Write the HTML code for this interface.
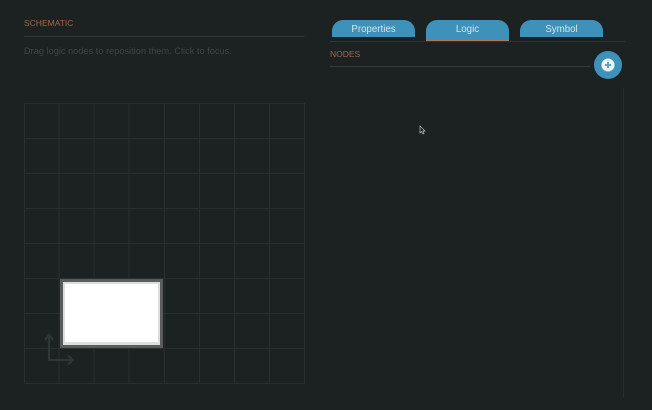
<!DOCTYPE html>
<html>
<head>
<meta charset="utf-8">
<style>
html,body{margin:0;padding:0;}
body{width:652px;height:410px;background:#1c2221;overflow:hidden;position:relative;font-family:"Liberation Sans","DejaVu Sans",sans-serif;}
.t{position:absolute;white-space:nowrap;filter:blur(.25px);}
.h{font-size:8.500px;color:#a3674a;line-height:10px;}
.tab{position:absolute;width:83px;top:20px;height:17px;background:#3e91b8;border-radius:11px 11px 0 0;color:#d3e5ec;font-size:9.700px;line-height:19px;text-align:center;}
svg{position:absolute;left:0;top:0;}
</style>
</head>
<body>
<div class="t h" style="left:24px;top:18px;">SCHEMATIC</div>
<div class="t" style="left:24px;top:45px;font-size:9.100px;letter-spacing:.06px;line-height:12px;color:#3f4645;">Drag logic nodes to reposition them. Click to focus.</div>
<div class="tab" style="left:332px;">Properties</div>
<div class="tab" style="left:426px;height:20px;border-bottom:1px solid #b9744f;">Logic</div>
<div class="tab" style="left:520px;">Symbol</div>
<div class="t h" style="left:330px;top:49px;">NODES</div>
<svg width="652" height="410" viewBox="0 0 652 410" fill="none">
<g stroke="#282f2e" stroke-width="1">
<path d="M24 36.500H304.500" stroke="#343a39"/>
<path d="M330 41.500H625" stroke="#2e3534"/>
<path d="M330 66.500H590" stroke="#343a39"/>
<path d="M623.500 88V398" stroke="#262d2c"/>
<path d="M24 103.500H304.500M24 138.500H304.500M24 173.500H304.500M24 208.500H304.500M24 243.500H304.500M24 278.500H304.500M24 313.500H304.500M24 348.500H304.500M24 383.500H304.500"/>
<path d="M24.500 103V384M59 103V384M94 103V384M129 103V384M164.500 103V384M199.500 103V384M234.500 103V384M269.500 103V384M304.500 103V384"/>
</g>
<path d="M49 336V360H72M45 340L49 335L53 340M68 355.500L73 360L68 364.500" stroke="#2f3635" stroke-width="2.200"/>
<rect x="60" y="279" width="103" height="69" fill="#5a5d5c"/>
<rect x="63" y="282" width="97" height="63" fill="#dcdedd"/>
<rect x="65" y="284" width="93" height="58" fill="#ffffff"/>
<circle cx="608" cy="65" r="14" fill="#3e91b8"/>
<circle cx="608" cy="65" r="6.500" fill="#eef4f6"/>
<path d="M608 62V68M605 65H611" stroke="#5fa3c4" stroke-width="2"/>
<path d="M420 126V133L421.500 131.500L423 134L424 133.500L423 131H425Z" fill="#1c2221" stroke="#b5b9b8" stroke-width="0.700"/>
</svg>
</body>
</html>
